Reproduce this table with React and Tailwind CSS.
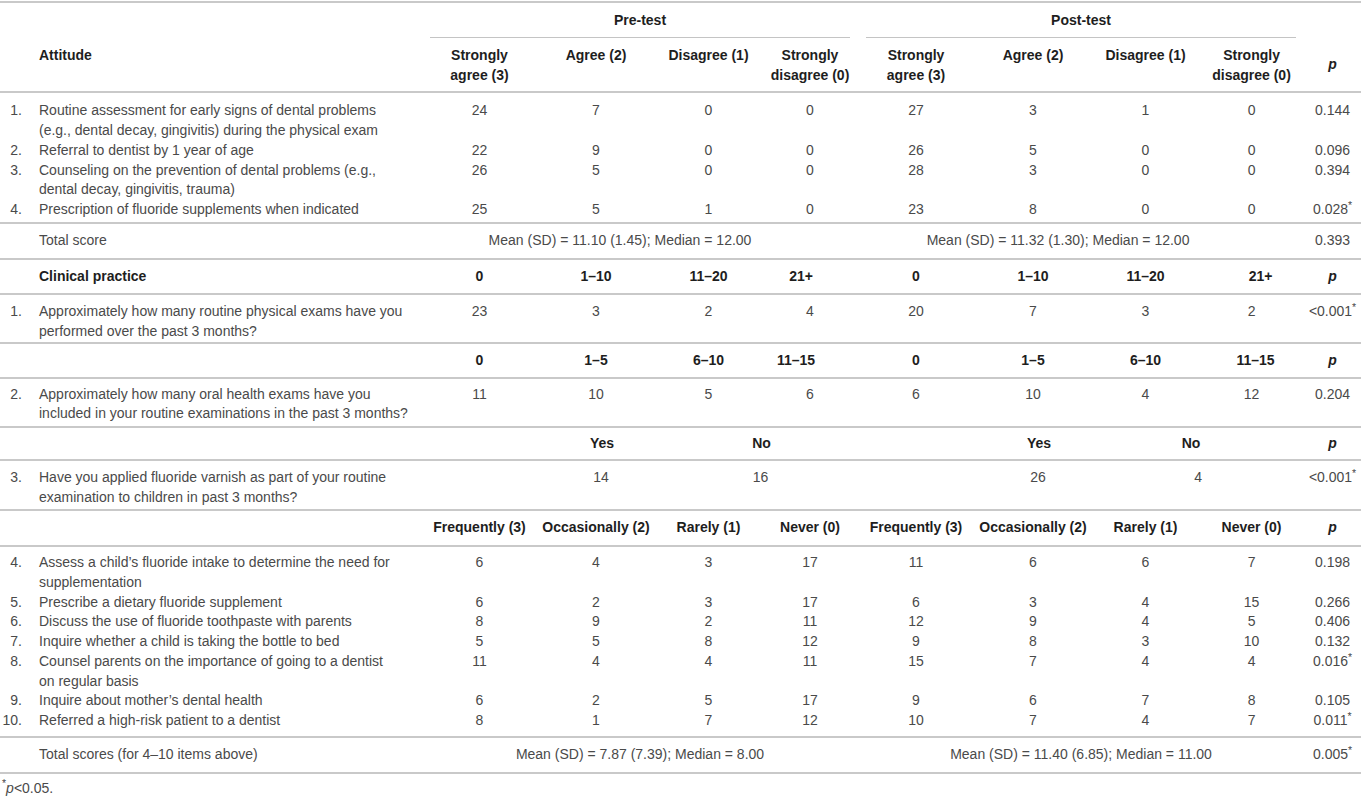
import React from "react";

const Star = () => <sup>*</sup>;

const P = ({ v }) => {
  if (v.endsWith("*")) {
    return (
      <>
        {v.slice(0, -1)}
        <Star />
      </>
    );
  }
  return <>{v}</>;
};

const LINE = "border-b-2 border-[#c9c9c9]";

function DataRow({ num, text, pre, post, p, pad, border }) {
  const base = `align-top text-center ${pad}`;
  return (
    <tr className={border ? LINE : ""}>
      <td className={`align-top text-right pr-[8px] ${pad}`}>{num}</td>
      <td className={`align-top text-left pl-[9px] whitespace-nowrap ${pad}`}>{text}</td>
      {pre.map((v, i) => (
        <td key={"a" + i} className={base}>{v}</td>
      ))}
      {post.map((v, i) => (
        <td key={"b" + i} className={base}>{v}</td>
      ))}
      <td className={base}>
        <P v={p} />
      </td>
    </tr>
  );
}

const attitude = [
  {
    num: "1.",
    text: (
      <>
        Routine assessment for early signs of dental problems
        <br />
        (e.g., dental decay, gingivitis) during the physical exam
      </>
    ),
    pre: [24, 7, 0, 0],
    post: [27, 3, 1, 0],
    p: "0.144",
  },
  {
    num: "2.",
    text: <>Referral to dentist by 1 year of age</>,
    pre: [22, 9, 0, 0],
    post: [26, 5, 0, 0],
    p: "0.096",
  },
  {
    num: "3.",
    text: (
      <>
        Counseling on the prevention of dental problems (e.g.,
        <br />
        dental decay, gingivitis, trauma)
      </>
    ),
    pre: [26, 5, 0, 0],
    post: [28, 3, 0, 0],
    p: "0.394",
  },
  {
    num: "4.",
    text: <>Prescription of fluoride supplements when indicated</>,
    pre: [25, 5, 1, 0],
    post: [23, 8, 0, 0],
    p: "0.028*",
  },
];

const freq = [
  {
    num: "4.",
    text: (
      <>
        Assess a child’s fluoride intake to determine the need for
        <br />
        supplementation
      </>
    ),
    pre: [6, 4, 3, 17],
    post: [11, 6, 6, 7],
    p: "0.198",
  },
  {
    num: "5.",
    text: <>Prescribe a dietary fluoride supplement</>,
    pre: [6, 2, 3, 17],
    post: [6, 3, 4, 15],
    p: "0.266",
  },
  {
    num: "6.",
    text: <>Discuss the use of fluoride toothpaste with parents</>,
    pre: [8, 9, 2, 11],
    post: [12, 9, 4, 5],
    p: "0.406",
  },
  {
    num: "7.",
    text: <>Inquire whether a child is taking the bottle to bed</>,
    pre: [5, 5, 8, 12],
    post: [9, 8, 3, 10],
    p: "0.132",
  },
  {
    num: "8.",
    text: (
      <>
        Counsel parents on the importance of going to a dentist
        <br />
        on regular basis
      </>
    ),
    pre: [11, 4, 4, 11],
    post: [15, 7, 4, 4],
    p: "0.016*",
  },
  {
    num: "9.",
    text: <>Inquire about mother’s dental health</>,
    pre: [6, 2, 5, 17],
    post: [9, 6, 7, 8],
    p: "0.105",
  },
  {
    num: "10.",
    text: <>Referred a high-risk patient to a dentist</>,
    pre: [8, 1, 7, 12],
    post: [10, 7, 4, 7],
    p: "0.011*",
  },
];

function padFor(i, n, first, last) {
  if (n === 1) return `${first} ${last}`;
  if (i === 0) return first;
  if (i === n - 1) return last;
  return "";
}

const H = "font-bold text-[#1e1e1e] text-center";

export default function App() {
  return (
    <div className="w-[1361px] bg-white pt-[1px] font-['Liberation_Sans',Arial,sans-serif] text-[14px] leading-[19.75px] text-[#4a4a4a]">
      <table className="w-[1361px] table-fixed border-collapse border-t-2 border-[#c9c9c9]">
        <colgroup>
          <col className="w-[30px]" />
          <col className="w-[392px]" />
          <col className="w-[115px]" />
          <col className="w-[118px]" />
          <col className="w-[107px]" />
          <col className="w-[96px]" />
          <col className="w-[116px]" />
          <col className="w-[118px]" />
          <col className="w-[107px]" />
          <col className="w-[105px]" />
          <col className="w-[57px]" />
        </colgroup>
        <tbody>
          {/* group header */}
          <tr>
            <td colSpan={2}></td>
            <th colSpan={4} className={`${H} pt-[8px] align-top`}>
              <div className="mx-[8px] border-b border-[#c4c4c4] pb-[6px]">Pre-test</div>
            </th>
            <th colSpan={4} className={`${H} pt-[8px] align-top`}>
              <div className="mx-[8px] border-b border-[#c4c4c4] pb-[6px]">Post-test</div>
            </th>
            <td></td>
          </tr>
          {/* column header */}
          <tr className={LINE}>
            <td></td>
            <th className={`font-bold text-[#1e1e1e] text-left pl-[9px] pt-[8px] pb-[6px] align-top`}>Attitude</th>
            <th className={`${H} pt-[8px] pb-[6px] align-top`}>
              Strongly
              <br />
              agree (3)
            </th>
            <th className={`${H} pt-[8px] pb-[6px] align-top`}>Agree (2)</th>
            <th className={`${H} pt-[8px] pb-[6px] align-top`}>Disagree (1)</th>
            <th className={`${H} pt-[8px] pb-[6px] align-top`}>
              Strongly
              <br />
              disagree (0)
            </th>
            <th className={`${H} pt-[8px] pb-[6px] align-top`}>
              Strongly
              <br />
              agree (3)
            </th>
            <th className={`${H} pt-[8px] pb-[6px] align-top`}>Agree (2)</th>
            <th className={`${H} pt-[8px] pb-[6px] align-top`}>Disagree (1)</th>
            <th className={`${H} pt-[8px] pb-[6px] align-top`}>
              Strongly
              <br />
              disagree (0)
            </th>
            <th className={`${H} align-middle italic`}>p</th>
          </tr>

          {attitude.map((r, i) => (
            <DataRow
              key={"att" + i}
              {...r}
              pad={padFor(i, attitude.length, "pt-[8px]", "pb-[2px]")}
              border={i === attitude.length - 1}
            />
          ))}

          {/* total score */}
          <tr className={LINE}>
            <td className="py-[7px]"></td>
            <td className="py-[7px] pl-[9px] text-left">Total score</td>
            <td colSpan={4} className="py-[7px] text-center pr-[40px]">
              Mean (SD) = 11.10 (1.45); Median = 12.00
            </td>
            <td colSpan={4} className="py-[7px] text-center pr-[46px]">
              Mean (SD) = 11.32 (1.30); Median = 12.00
            </td>
            <td className="py-[7px] text-center">0.393</td>
          </tr>

          {/* clinical practice header */}
          <tr className={LINE}>
            <td className="py-[7px]"></td>
            <th className="py-[7px] pl-[9px] text-left font-bold text-[#1e1e1e]">Clinical practice</th>
            <th className={`${H} py-[7px]`}>0</th>
            <th className={`${H} py-[7px]`}>1–10</th>
            <th className={`${H} py-[7px]`}>11–20</th>
            <th className={`${H} py-[7px] pr-[18px]`}>21+</th>
            <th className={`${H} py-[7px]`}>0</th>
            <th className={`${H} py-[7px]`}>1–10</th>
            <th className={`${H} py-[7px]`}>11–20</th>
            <th className={`${H} py-[7px] pl-[18px]`}>21+</th>
            <th className={`${H} py-[7px] italic`}>p</th>
          </tr>

          <DataRow
            num="1."
            text={
              <>
                Approximately how many routine physical exams have you
                <br />
                performed over the past 3 months?
              </>
            }
            pre={[23, 3, 2, 4]}
            post={[20, 7, 3, 2]}
            p="<0.001*"
            pad="pt-[7px] pb-[0px]"
            border
          />

          <tr className={LINE}>
            <td className="pt-[7px] pb-[6px]"></td>
            <td className="pt-[7px] pb-[6px]"></td>
            <th className={`${H} pt-[7px] pb-[6px]`}>0</th>
            <th className={`${H} pt-[7px] pb-[6px]`}>1–5</th>
            <th className={`${H} pt-[7px] pb-[6px]`}>6–10</th>
            <th className={`${H} pt-[7px] pb-[6px] pr-[28px]`}>11–15</th>
            <th className={`${H} pt-[7px] pb-[6px]`}>0</th>
            <th className={`${H} pt-[7px] pb-[6px]`}>1–5</th>
            <th className={`${H} pt-[7px] pb-[6px]`}>6–10</th>
            <th className={`${H} pt-[7px] pb-[6px] pl-[8px]`}>11–15</th>
            <th className={`${H} pt-[7px] pb-[6px] italic`}>p</th>
          </tr>

          <DataRow
            num="2."
            text={
              <>
                Approximately how many oral health exams have you
                <br />
                included in your routine examinations in the past 3 months?
              </>
            }
            pre={[11, 10, 5, 6]}
            post={[6, 10, 4, 12]}
            p="0.204"
            pad="pt-[6px] pb-[2px]"
            border
          />

          <tr className={LINE}>
            <td className="pt-[6px] pb-[5px]"></td>
            <td className="pt-[6px] pb-[5px]"></td>
            <td className="pt-[6px] pb-[5px]"></td>
            <th className={`${H} pt-[6px] pb-[5px] pl-[12px]`}>Yes</th>
            <th colSpan={2} className={`${H} pt-[6px] pb-[5px] pl-[10px]`}>No</th>
            <td className="pt-[6px] pb-[5px]"></td>
            <th className={`${H} pt-[6px] pb-[5px] pl-[12px]`}>Yes</th>
            <th colSpan={2} className={`${H} pt-[6px] pb-[5px] pr-[14px]`}>No</th>
            <th className={`${H} pt-[6px] pb-[5px] italic`}>p</th>
          </tr>

          <tr className={LINE}>
            <td className="align-top text-right pr-[8px] pt-[7px] pb-[2px]">3.</td>
            <td className="align-top text-left pl-[9px] whitespace-nowrap pt-[7px] pb-[2px]">
              Have you applied fluoride varnish as part of your routine
              <br />
              examination to children in past 3 months?
            </td>
            <td className="pt-[7px] pb-[2px]"></td>
            <td className="align-top text-center pt-[7px] pb-[2px] pl-[10px]">14</td>
            <td colSpan={2} className="align-top text-center pt-[7px] pb-[2px] pl-[8px]">16</td>
            <td className="pt-[7px] pb-[2px]"></td>
            <td className="align-top text-center pt-[7px] pb-[2px] pl-[10px]">26</td>
            <td colSpan={2} className="align-top text-center pt-[7px] pb-[2px]">4</td>
            <td className="align-top text-center pt-[7px] pb-[2px]">
              <P v="<0.001*" />
            </td>
          </tr>

          <tr className={LINE}>
            <td className="py-[7px]"></td>
            <td className="py-[7px]"></td>
            <th className={`${H} py-[7px] whitespace-nowrap`}>Frequently (3)</th>
            <th className={`${H} py-[7px] whitespace-nowrap`}>Occasionally (2)</th>
            <th className={`${H} py-[7px] whitespace-nowrap`}>Rarely (1)</th>
            <th className={`${H} py-[7px] whitespace-nowrap`}>Never (0)</th>
            <th className={`${H} py-[7px] whitespace-nowrap`}>Frequently (3)</th>
            <th className={`${H} py-[7px] whitespace-nowrap`}>Occasionally (2)</th>
            <th className={`${H} py-[7px] whitespace-nowrap`}>Rarely (1)</th>
            <th className={`${H} py-[7px] whitespace-nowrap`}>Never (0)</th>
            <th className={`${H} py-[7px] italic`}>p</th>
          </tr>

          {freq.map((r, i) => (
            <DataRow
              key={"fr" + i}
              {...r}
              pad={padFor(i, freq.length, "pt-[6px]", "pb-[5px]")}
              border={i === freq.length - 1}
            />
          ))}

          <tr className={LINE}>
            <td className="py-[7px]"></td>
            <td className="py-[7px] pl-[9px] text-left">Total scores (for 4–10 items above)</td>
            <td colSpan={4} className="py-[7px] text-center">
              Mean (SD) = 7.87 (7.39); Median = 8.00
            </td>
            <td colSpan={4} className="py-[7px] text-center">
              Mean (SD) = 11.40 (6.85); Median = 11.00
            </td>
            <td className="py-[7px] text-center">
              <P v="0.005*" />
            </td>
          </tr>
        </tbody>
      </table>
      <div className="pl-[2px] pt-[6px] leading-[16px]">
        <sup>*</sup>
        <i>p</i>&lt;0.05.
      </div>
    </div>
  );
}
